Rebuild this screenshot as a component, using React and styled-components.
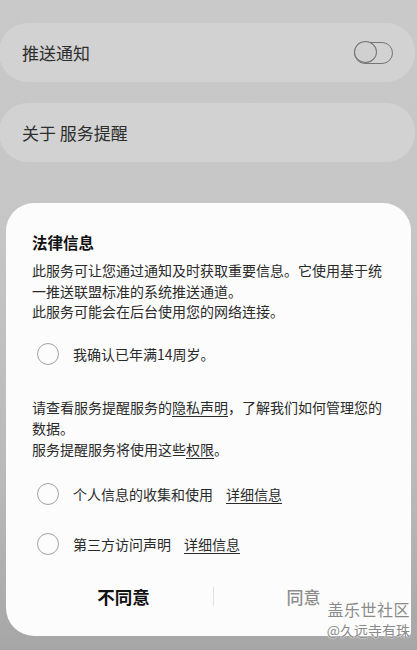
import React from 'react';
import styled, { createGlobalStyle } from 'styled-components';

const GlobalStyle = createGlobalStyle`
  html, body {
    margin: 0;
    padding: 0;
  }
  body {
    font-family: "Noto Sans CJK SC", "Noto Sans", sans-serif;
  }
`;

const Screen = styled.div`
  position: relative;
  box-sizing: border-box;
  width: 417px;
  height: 650px;
  overflow: hidden;
  padding-top: 23px;
  background: linear-gradient(#c9c9c9 0%, #c6c6c6 35%, #b9b9b9 75%, #a6a6a6 100%);
`;

const SettingRow = styled.div`
  box-sizing: border-box;
  display: flex;
  align-items: center;
  justify-content: space-between;
  height: 59px;
  margin: 0 2px ${(p) => p.$gap || 0}px -1px;
  padding: 0 22px 0 23px;
  border-radius: 29px;
  background: #d2d2d2;
  color: #2e2e2e;
  font-size: 17px;
`;

const Toggle = styled.div`
  position: relative;
  box-sizing: border-box;
  width: 39px;
  height: 22px;
  border: 1.5px solid #767676;
  border-radius: 11px;

  &::before {
    content: '';
    position: absolute;
    left: -1.5px;
    top: -1.5px;
    box-sizing: border-box;
    width: 23px;
    height: 22px;
    border: 1.5px solid #767676;
    border-radius: 50%;
    background: #d0d0d0;
  }
`;

const Dialog = styled.div`
  position: relative;
  box-sizing: border-box;
  height: 433px;
  margin: 41px 6px 0 6px;
  padding: 28px 20px 0 26px;
  background: #fcfcfc;
  border-radius: 28px 28px 4px 28px;
  color: #2a2a2a;
`;

const Title = styled.div`
  font-size: 15.5px;
  font-weight: 700;
  line-height: 22px;
  color: #111;
  margin-bottom: 7px;
`;

const Para = styled.p`
  margin: ${(p) => p.$mt || 0}px 0 0;
  font-size: 14px;
  line-height: ${(p) => p.$lh || 20.5}px;
`;

const Link = styled.span`
  text-decoration: underline;
  text-underline-offset: 3px;
`;

const CheckRow = styled.div`
  display: flex;
  align-items: center;
  height: ${(p) => p.$h}px;
  margin-top: ${(p) => p.$mt || 0}px;
  padding-left: 5px;
  font-size: 14px;
`;

const Radio = styled.span`
  box-sizing: border-box;
  flex: none;
  width: 22px;
  height: 22px;
  margin-right: 14px;
  border: 1.5px solid #a3a3a3;
  border-radius: 50%;
`;

const Detail = styled(Link)`
  margin-left: 13px;
`;

const Actions = styled.div`
  display: grid;
  grid-template-columns: 1fr 1px 1fr;
  align-items: center;
  height: 50px;
  margin: 3px -2px 0 2px;
`;

const ActionButton = styled.button`
  border: none;
  background: none;
  padding: 0;
  font-family: inherit;
  font-size: ${(p) => (p.$primary ? 17.5 : 17)}px;
  font-weight: ${(p) => (p.$primary ? 700 : 500)};
  color: ${(p) => (p.$primary ? '#111' : '#8c8c8c')};
  text-align: center;
`;

const Divider = styled.span`
  height: 19px;
  background: #e2e2e2;
`;

const Watermark = styled.div`
  position: absolute;
  right: 7px;
  bottom: 10px;
  display: flex;
  flex-direction: column;
  align-items: flex-end;
  color: #8a8a8a;
  text-shadow: 0 0 2px #fff, 0 0 1px #fff;
`;

const WatermarkLine = styled.span`
  font-size: ${(p) => p.$size}px;
  line-height: ${(p) => p.$lh}px;
  letter-spacing: ${(p) => p.$ls || 0}px;
`;

export default function App() {
  return (
    <>
      <GlobalStyle />
      <Screen>
        <SettingRow $gap={21}>
          推送通知
          <Toggle />
        </SettingRow>
        <SettingRow>关于 服务提醒</SettingRow>

        <Dialog>
          <Title>法律信息</Title>
          <Para>
            此服务可让您通过通知及时获取重要信息。它使用基于统一推送联盟标准的系统推送通道。
            <br />
            此服务可能会在后台使用您的网络连接。
          </Para>
          <CheckRow $h={44} $mt={10}>
            <Radio />
            我确认已年满14周岁。
          </CheckRow>
          <Para $mt={21} $lh={21}>
            请查看服务提醒服务的<Link>隐私声明</Link>，了解我们如何管理您的数据。
            <br />
            服务提醒服务将使用这些<Link>权限</Link>。
          </Para>
          <CheckRow $h={50} $mt={9}>
            <Radio />
            个人信息的收集和使用
            <Detail>详细信息</Detail>
          </CheckRow>
          <CheckRow $h={50}>
            <Radio />
            第三方访问声明
            <Detail>详细信息</Detail>
          </CheckRow>
          <Actions>
            <ActionButton $primary>不同意</ActionButton>
            <Divider />
            <ActionButton>同意</ActionButton>
          </Actions>
        </Dialog>

        <Watermark>
          <WatermarkLine $size={16} $lh={22} $ls={0.5}>盖乐世社区</WatermarkLine>
          <WatermarkLine $size={14} $lh={20}>@久远寺有珠</WatermarkLine>
        </Watermark>
      </Screen>
    </>
  );
}
